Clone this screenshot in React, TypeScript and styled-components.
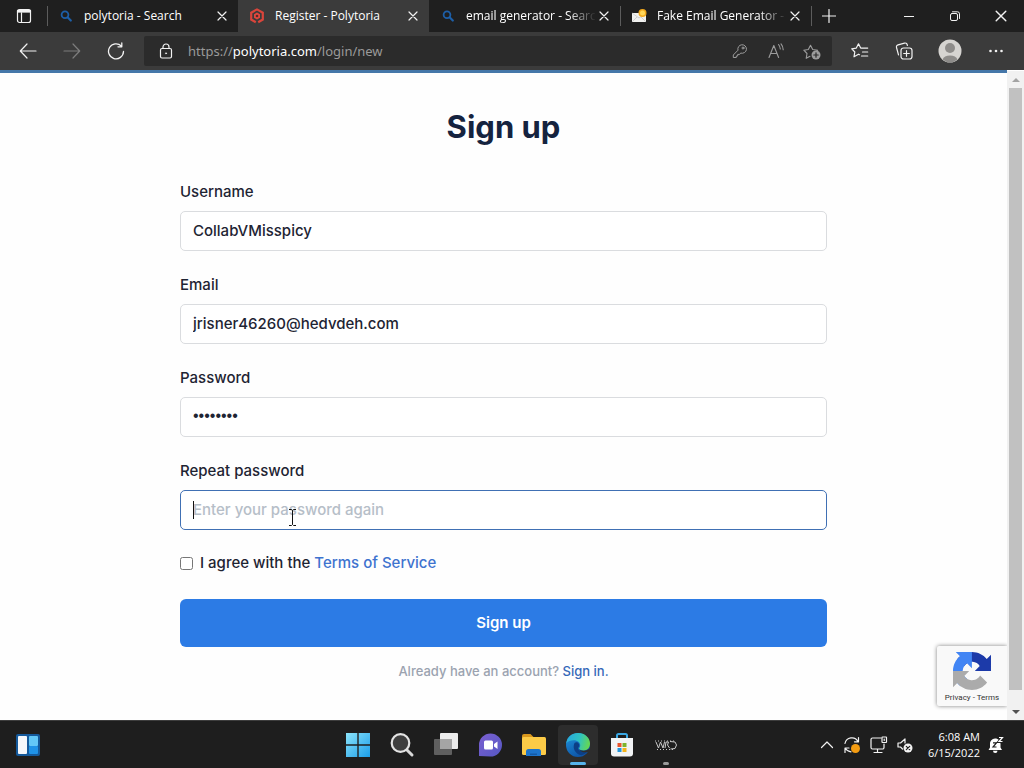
import React from "react";
import styled, { createGlobalStyle, css } from "styled-components";

const uiFont = `"Open Sans", "Noto Sans", sans-serif`;
const siteFont = `Inter, Roboto, sans-serif`;

const GlobalStyle = createGlobalStyle`
  *, *::before, *::after { box-sizing: border-box; }
  body { margin: 0; background: #1e1e1e; }
  button, input { font: inherit; }
`;

/* ---------- shared ---------- */

const Desktop = styled.div`
  min-height: 100vh;
  display: flex;
  flex-direction: column;
  font-family: ${uiFont};
  font-size: 12px;
  color: #fff;
`;

const IconButton = styled.button<{ $w?: number; $tone?: string }>`
  width: ${(p) => p.$w ?? 44}px;
  align-self: stretch;
  flex: none;
  padding: 0;
  border: 0;
  background: none;
  color: ${(p) => p.$tone ?? "#f2f2f2"};
  display: flex;
  align-items: center;
  justify-content: center;
`;

const Svg = styled.svg`
  display: block;
  flex: none;
  fill: none;
`;

type IconProps = { size?: number; box?: number; children: React.ReactNode };
const Line = ({ size = 16, box = 16, children }: IconProps) => (
  <Svg width={size} height={size} viewBox={`0 0 ${box} ${box}`} stroke="currentColor" strokeLinecap="round" strokeLinejoin="round" aria-hidden="true">
    {children}
  </Svg>
);

/* ---------- browser chrome ---------- */

const TabStrip = styled.header`
  height: 32px;
  display: flex;
  background: #1f1f1f;
`;

const Tab = styled.div<{ $active?: boolean; $divider?: boolean }>`
  flex: 0 1 191px;
  min-width: 0;
  display: flex;
  align-items: center;
  padding: 0 8px 0 11px;
  background: ${(p) => (p.$active ? "#3b3b3b" : "transparent")};
  ${(p) =>
    p.$divider &&
    css`
      background: linear-gradient(#5c5c5c, #5c5c5c) left center / 1px 20px no-repeat;
    `}
`;

const TabTitle = styled.button<{ $fade?: boolean }>`
  flex: 1;
  min-width: 0;
  padding: 0;
  margin: 0 0 0 10px;
  border: 0;
  background: none;
  color: #fff;
  text-align: left;
  white-space: nowrap;
  overflow: hidden;
  font-size: 12px;
  line-height: 20px;
  ${(p) => p.$fade && css`mask-image: linear-gradient(to left, transparent, #000 28px);`}
`;

const NewTab = styled(IconButton)`
  background: linear-gradient(#5c5c5c, #5c5c5c) left center / 1px 20px no-repeat;
`;

const Spacer = styled.div`
  flex: 1;
`;

const Toolbar = styled.nav`
  height: 38px;
  display: flex;
  align-items: center;
  padding: 0 6px;
  background: #3b3b3b;
`;

const AddressBar = styled.div`
  flex: 1;
  min-width: 0;
  height: 30px;
  margin: 0 6px;
  padding-right: 2px;
  display: flex;
  align-items: center;
  border-radius: 2px;
  background: #2b2b2b;
`;

const Address = styled.div`
  flex: 1;
  min-width: 0;
  font-family: "Noto Sans", "Open Sans", sans-serif;
  font-size: 13px;
  line-height: 20px;
  color: #9a9a9a;
  white-space: nowrap;
  overflow: hidden;
  outline: 0;
`;

const Domain = styled.span`
  color: #fff;
`;

/* ---------- page ---------- */

const Viewport = styled.div`
  flex: 1;
  display: flex;
  background: #fff;
`;

const Page = styled.main`
  flex: 1;
  min-width: 0;
  position: relative;
  padding: 32px 24px;
  border-top: 3px solid #4577a9;
  background: #fefefe;
  color: #1e2433;
  font-family: ${siteFont};
  font-size: 15px;
  font-weight: 500;
  line-height: 24px;
`;

const Form = styled.form`
  max-width: 647px;
  margin: 0 auto;
  display: flex;
  flex-direction: column;
`;

const Title = styled.h1`
  margin: 0 0 31px;
  font-size: 31px;
  line-height: 44px;
  font-weight: 700;
  color: #15233f;
  text-align: center;
`;

const Field = styled.div`
  display: flex;
  flex-direction: column;
  gap: 7px;
  margin-bottom: 22px;
`;

const FieldBox = styled.div`
  position: relative;
  display: flex;
`;

const TextInput = styled.input<{ $focused?: boolean }>`
  width: 100%;
  height: 40px;
  padding: 0 12px 2px;
  border: 1px solid ${(p) => (p.$focused ? "#4070b4" : "#dadcdf")};
  border-radius: 5px;
  outline: 0;
  background: #fff;
  color: #1e2433;
  &[type="password"]:not(:placeholder-shown) {
    font-family: "Liberation Sans", Arial, sans-serif;
    font-size: 16px;
  }
  &::placeholder {
    color: #b6bec8;
    opacity: 1;
  }
`;

const Caret = styled.span`
  position: absolute;
  left: 13px;
  top: 11px;
  width: 1px;
  height: 18px;
  background: #111;
`;

const Pointer = styled.span`
  position: absolute;
  left: 108px;
  top: 19px;
`;

const Terms = styled.div`
  display: flex;
  align-items: center;
  gap: 7px;
  line-height: 22px;
`;

const Check = styled.input`
  width: 13px;
  height: 13px;
  margin: 0;
`;

const Link = styled.a`
  color: #3e73cf;
  text-decoration: none;
`;

const Submit = styled.button`
  height: 48px;
  margin: 25px 0 12px;
  border: 0;
  border-radius: 6px;
  background: #2c7be5;
  color: #fff;
  font-weight: 600;
`;

const Already = styled.p`
  margin: 0;
  font-size: 13px;
  text-align: center;
  color: #9ba3b0;
  a { color: #3468b8; }
`;

const Captcha = styled.aside`
  position: absolute;
  right: 0;
  bottom: 14px;
  width: 70px;
  height: 60px;
  padding-top: 6px;
  display: flex;
  flex-direction: column;
  align-items: center;
  border-radius: 2px 0 0 2px;
  background: #f9f9f9;
  box-shadow: 0 0 4px #808080;
  clip-path: inset(-6px 0 -6px -6px);
  font: 8px/12px Roboto, sans-serif;
  color: #333;
  svg { margin-bottom: 2px; }
  a { color: inherit; text-decoration: none; }
`;

const ScrollBar = styled.div`
  width: 17px;
  padding: 0 2px;
  margin-top: 1px;
  display: flex;
  flex-direction: column;
  align-items: center;
  background: #f1f1f1;
`;

const ScrollThumb = styled.div`
  flex: 1;
  width: 13px;
  background: #c1c1c1;
`;

const ScrollArrow = styled.button<{ $end?: boolean }>`
  height: ${(p) => (p.$end ? 30 : 17)}px;
  padding: ${(p) => (p.$end ? "13px 0 0" : "0")};
  border: 0;
  background: none;
  display: flex;
  align-items: center;
`;

/* ---------- taskbar ---------- */

const Taskbar = styled.footer`
  height: 48px;
  display: grid;
  grid-template-columns: 1fr auto 1fr;
  background: #1e1e1e;
  border-top: 1px solid #3d3d3d;
`;

const TaskGroup = styled.div<{ $end?: boolean }>`
  display: flex;
  align-items: center;
  justify-content: ${(p) => (p.$end ? "flex-end" : "flex-start")};
  padding: ${(p) => (p.$end ? "0 20px 0 0" : "0")};
`;

const Widgets = styled(IconButton)`
  margin-left: 6px;
`;

const AppTile = styled(IconButton)<{ $active?: boolean; $running?: boolean }>`
  position: relative;
  align-self: center;
  height: 40px;
  width: 40px;
  margin: 0 2px;
  border-radius: 4px;
  background: ${(p) => (p.$active ? "#2d2d2d" : "none")};
  ${(p) =>
    (p.$active || p.$running) &&
    css`
      &::after {
        content: "";
        position: absolute;
        bottom: 0;
        width: ${p.$active ? 16 : 6}px;
        height: 3px;
        border-radius: 2px;
        background: ${p.$active ? "#56b4ec" : "#9a9a9a"};
      }
    `}
`;

const Clock = styled.time`
  margin: 0 8px 0 10px;
  text-align: right;
  font-size: 11px;
  line-height: 16px;
  white-space: nowrap;
`;

/* ---------- icons ---------- */

const Close = ({ size = 10 }: { size?: number }) => (
  <Line size={size} box={10}><path d="M1 1l8 8M9 1l-8 8" strokeWidth="1.2" /></Line>
);

const SearchFav = () => (
  <Line><circle cx="7" cy="6.7" r="3.4" stroke="#1d5fa8" strokeWidth="1.8" /><path d="M9.6 9.3l3.2 3.2" stroke="#1d5fa8" strokeWidth="2.2" /></Line>
);

const PolyFav = () => (
  <Svg width="16" height="16" viewBox="0 0 16 16" aria-hidden="true">
    <path d="M6.800 14.200L2.200 11.500V4.700L8 1.400l5.800 3.300v6.800l-4.600 2.700" stroke="#d9453b" strokeWidth="2.200" />
    <path d="M8 4.600l3 1.700v3.400L8 11.600 5 9.700V6.300z" fill="#e2483d" />
    <circle cx="8" cy="8" r="1.300" fill="#5a2a28" />
  </Svg>
);

const MailFav = () => (
  <Svg width="16" height="16" viewBox="0 0 16 16" aria-hidden="true">
    <rect x="1" y="5" width="14" height="9" fill="#f1f1ef" />
    <path d="M1 5l7 5 7-5M1 14l5-5M15 14l-5-5" stroke="#cfcfcf" strokeWidth="1" />
    <circle cx="11.500" cy="5" r="4" fill="#f2a81d" />
    <circle cx="11.500" cy="5" r="2.500" fill="#ffd75a" />
  </Svg>
);

const TabActions = () => (
  <Line size={16}><rect x="1.500" y="1.500" width="13" height="13" rx="2" strokeWidth="1.200" /><path d="M2 4h12M5.500 5v9" strokeWidth="1.200" /><path d="M2 3h12" strokeWidth="2.400" /></Line>
);

const Back = () => (
  <Line size={18} box={18}><path d="M17 9H1.500M8 2L1.300 9 8 16" strokeWidth="1.200" /></Line>
);
const Forward = () => (
  <Line size={18} box={18}><path d="M1 9h15.500M10 2l6.700 7-6.700 7" strokeWidth="1.200" /></Line>
);
const Refresh = () => (
  <Line size={18} box={18}><path d="M16.500 9.500A7.500 7.500 0 1 1 14.300 4M14.800 1v3.800H11" strokeWidth="1.300" /></Line>
);
const Lock = () => (
  <Line><rect x="2.500" y="5.500" width="11" height="9.500" rx="1.500" strokeWidth="1.200" /><path d="M5 5.500V4a3 3 0 0 1 6 0v1.500" strokeWidth="1.200" /><circle cx="8" cy="10.300" r=".6" fill="currentColor" strokeWidth=".6" /></Line>
);
const Key = () => (
  <Line><path d="M9 10.200A4.300 4.300 0 1 0 6 7.200L1.300 12v2.500h3V13h1.400v-1.600H7.300z" /><circle cx="11" cy="5" r="1" /></Line>
);
const ReadAloud = () => (
  <Line><path d="M1 14.500L5.800 2.500l4.800 12M2.800 10.500h6M10.500 1.500a7 7 0 0 1 1.800 4.500M13 .8a9 9 0 0 1 2.200 6" strokeWidth="1.100" /></Line>
);
const AddFavorite = () => (
  <Line size={18} box={18}>
    <path d="M7 14.300l-3.800 2 .8-4.800L.8 8.200l4.500-.7 2.200-4.300 2.200 4.300 5 .7-1.500 1.500" strokeWidth="1.100" />
    <circle cx="13" cy="13" r="4.500" fill="currentColor" stroke="none" />
    <path d="M13 10.800v4.400M10.800 13h4.400" stroke="#2b2b2b" strokeWidth="1.200" />
  </Line>
);
const Favorites = () => (
  <Line size={18} box={18}>
    <path d="M8.500 12.700l-1-.5L3 14.800l.8-4.800L.8 6.800l4.500-.7L7.500 1.800l2.200 4.300h7M11.500 10h5.200M10.500 14h6.200" strokeWidth="1.200" />
  </Line>
);
const Collections = () => (
  <Line size={18} box={18}>
    <rect x="6" y="6" width="11" height="11" rx="2.500" strokeWidth="1.200" />
    <path d="M11.500 8.700v5.600M8.700 11.500h5.600M3.500 12.800L1.500 5.500a2.200 2.200 0 0 1 1.600-2.700l6.400-1.700a2.200 2.200 0 0 1 2.700 1.600l.2.800" strokeWidth="1.200" />
  </Line>
);
const Avatar = () => (
  <Svg width="24" height="24" viewBox="0 0 24 24" aria-hidden="true">
    <circle cx="12" cy="12" r="11.500" fill="#d6d4d1" />
    <circle cx="12" cy="9" r="5" fill="#8e8c8a" />
    <path d="M4.500 20.500a7.800 5.500 0 0 1 15 0A11.500 11.500 0 0 1 4.500 20.500z" fill="#8e8c8a" />
  </Svg>
);
const More = () => (
  <Line><g fill="currentColor" stroke="none"><circle cx="2.500" cy="8" r="1.300" /><circle cx="8" cy="8" r="1.300" /><circle cx="13.500" cy="8" r="1.300" /></g></Line>
);

const IBeam = () => (
  <Svg width="9" height="17" viewBox="0 0 9 17" stroke="#111" aria-hidden="true">
    <path d="M1 .5h2.500l1 1 1-1H8M4.500 1.500v14M1 16.500h2.500l1-1 1 1H8" />
  </Svg>
);

const Recaptcha = () => (
  <Svg width="38" height="38" viewBox="0 0 64 64" aria-hidden="true">
    <path fill="#1c3aa9" d="M64 31.955l-.033-1.370V4.687l-7.160 7.160C50.948 4.674 42.033.093 32.050.093c-10.400 0-19.622 4.960-25.458 12.640l11.736 11.860a15.550 15.550 0 0 1 4.754-5.334c2.050-1.600 4.952-2.906 8.968-2.906.485 0 .86.057 1.135.163 4.976.393 9.288 3.140 11.828 7.124l-8.307 8.307L64 31.953" />
    <path fill="#4285f4" d="M31.862.094l-1.370.033H4.594l7.160 7.160C4.580 13.147 0 22.060 0 32.046c0 10.400 4.960 19.622 12.640 25.458L24.500 45.768a15.550 15.550 0 0 1-5.334-4.754c-1.600-2.050-2.906-4.952-2.906-8.968 0-.485.057-.86.163-1.135.393-4.976 3.140-9.288 7.124-11.828l8.307 8.307L31.860.095" />
    <path fill="#ababab" d="M.001 32.045l.033 1.370v25.898l7.160-7.160c5.860 7.173 14.774 11.754 24.760 11.754 10.400 0 19.622-4.960 25.458-12.640l-11.736-11.860a15.550 15.550 0 0 1-4.754 5.334c-2.050 1.600-4.952 2.906-8.968 2.906-.485 0-.86-.057-1.135-.163-4.976-.393-9.288-3.140-11.828-7.124l8.307-8.307c-10.522.040-22.400.066-27.295-.005" />
  </Svg>
);

const WidgetsIcon = () => (
  <Svg width="24" height="24" viewBox="0 0 24 24" aria-hidden="true">
    <rect x="0" y="1" width="24" height="22" rx="2" fill="#14599b" />
    <rect x="2" y="3" width="9" height="18" rx="1" fill="#f4f7fb" />
    <rect x="13" y="3" width="9" height="10" rx="1" fill="#63c8f8" />
    <rect x="13" y="13" width="9" height="8" rx="1" fill="#1f93e8" />
  </Svg>
);

const apps: { name: string; active?: boolean; running?: boolean; art: React.ReactNode }[] = [
  {
    name: "Start",
    art: (
      <>
        <defs><linearGradient id="win" x1="0" y1="0" x2="1" y2="1"><stop offset="0" stopColor="#8be4fb" /><stop offset="1" stopColor="#1b9de8" /></linearGradient></defs>
        <path fill="url(#win)" d="M1 1h11.300v11.300H1zM13.700 1H25v11.300H13.700zM1 13.700h11.300V25H1zM13.700 13.700H25V25H13.700z" />
      </>
    ),
  },
  {
    name: "Search",
    art: (
      <>
        <path d="M17.500 17.500l5.500 5.500" stroke="#d9d9d9" strokeWidth="3" strokeLinecap="round" />
        <circle cx="11.500" cy="11" r="8.800" fill="#3f3f3f" stroke="#e4e4e4" strokeWidth="2.200" />
      </>
    ),
  },
  {
    name: "Task view",
    art: (
      <>
        <rect x="7" y="1" width="18" height="16" rx="1" fill="#ececec" />
        <rect x="1" y="7" width="18" height="16" rx="1" fill="#6b6b6b" fillOpacity=".85" />
        <path d="M7 7h12v10H7z" fill="#a5a5a5" />
      </>
    ),
  },
  {
    name: "Chat",
    art: (
      <>
        <defs><linearGradient id="chat" x1="0" y1="0" x2="1" y2="1"><stop offset="0" stopColor="#7b5fd0" /><stop offset="1" stopColor="#5558c4" /></linearGradient></defs>
        <path d="M2 24V13A11.500 11.500 0 1 1 13.500 24.500z" fill="url(#chat)" />
        <rect x="7" y="8.500" width="9" height="9" rx="1.500" fill="#fff" />
        <path d="M17 12l3.500-2.500v7.500L17 14.500z" fill="#fff" />
      </>
    ),
  },
  {
    name: "File Explorer",
    art: (
      <>
        <path d="M1 4a2 2 0 0 1 2-2h6.500l3 3H12v6H1z" fill="#d9971d" />
        <rect x="1" y="5" width="24" height="18" rx="1.500" fill="#fccb47" />
        <path d="M5 24v-4.500a2.500 2.500 0 0 1 2.500-2.500h10a2.500 2.500 0 0 1 2.500 2.500V24z" fill="#1c74cc" />
        <path d="M9 23v-1.500h7V23z" fill="#145aa6" />
      </>
    ),
  },
  {
    name: "Microsoft Edge",
    active: true,
    art: (
      <>
        <defs>
          <linearGradient id="edgeTop" x1="0" y1=".3" x2="1" y2=".5"><stop offset="0" stopColor="#28a9e0" /><stop offset=".55" stopColor="#2fc3c0" /><stop offset="1" stopColor="#67d84f" /></linearGradient>
          <linearGradient id="edgeSide" x1="0" y1="0" x2=".5" y2="1"><stop offset="0" stopColor="#2096dd" /><stop offset="1" stopColor="#0d55a8" /></linearGradient>
        </defs>
        <circle cx="13" cy="13" r="12" fill="url(#edgeSide)" />
        <path d="M1.200 11.500C2 5 7 1 13 1c7 0 12 5 12 10.500 0 4.500-3 7-6.500 7-3 0-4.500-1.300-4.500-2 0-.6 1.200-1.200 1.200-3.200 0-2.500-2.500-5-6.500-5-3 0-6 1.200-7.500 3.200z" fill="url(#edgeTop)" />
        <path d="M9.500 11c-2.500 5 1 11.500 7 12.300 3-.8 5-2.300 6.500-4.800-2 1-3.500 1.200-5 1-3.500-.3-5-2-5-3.500 0-.5 1.200-1.200 1.200-2.800 0-1.700-1.200-2.700-2.200-2.900-.9-.1-1.800.1-2.500.7z" fill="#0c3f86" />
        <path d="M14 16.500c0 1 1.700 2.200 4.500 2.200 2 0 4-.7 5-1.700l1 1.500-1.500 1.500c-3.500 1-8 0-9-3.500z" fill="#2d2d2d" />
      </>
    ),
  },
  {
    name: "Microsoft Store",
    art: (
      <>
        <path d="M8 7V3.500A1.500 1.500 0 0 1 9.500 2h7A1.500 1.500 0 0 1 18 3.500V7" stroke="#3aa8e4" strokeWidth="2" />
        <path d="M2 6h22v15.500a3 3 0 0 1-3 3H5a3 3 0 0 1-3-3z" fill="#f1f3f5" />
        <path d="M8.500 11h4v4h-4z" fill="#e8532b" /><path d="M13.500 11h4v4h-4z" fill="#7db42c" />
        <path d="M8.500 16h4v4h-4z" fill="#2296dd" /><path d="M13.500 16h4v4h-4z" fill="#f4b41a" />
      </>
    ),
  },
  {
    name: "WRD",
    running: true,
    art: (
      <g stroke="#c9c9c9" strokeWidth="1">
        <path d="M3 10l2.500 6 2-6 2.500 6 1.500-6M12 16l1-6h2.500l-1 3 2 3M17 9.500l5 .5 1.500 3-1.500 3.500-4.500.5" />
        <path d="M2 9h20M4 17.500h18" strokeDasharray="1 2" />
      </g>
    ),
  },
];

const Chevron = () => (
  <Line size={14} box={14}><path d="M1.500 9.500L7 4l5.500 5.500" strokeWidth="1.200" /></Line>
);
const Sync = () => (
  <Line size={18} box={18}>
    <path d="M2 7.500A7 7 0 0 1 15 5.500M15.500 1.500v4.300h-4M2 16.500V12h4M2.500 12.500A7 7 0 0 0 8 15.800" strokeWidth="1.200" />
    <circle cx="12.500" cy="12.500" r="4.500" fill="#f39c12" stroke="none" />
  </Line>
);
const Network = () => (
  <Line size={18} box={18}>
    <path d="M11 2H2.500A1.500 1.500 0 0 0 1 3.500v8A1.500 1.500 0 0 0 2.500 13H12.500A1.500 1.500 0 0 0 14 11.500V8M7.500 13v3.500M4 16.500h8" strokeWidth="1.200" />
    <rect x="12" y="1" width="4.500" height="5.500" rx=".5" strokeWidth="1.200" /><path d="M14.200 3v1.500" strokeWidth="1.200" />
  </Line>
);
const Muted = () => (
  <Line size={18} box={18}>
    <path d="M6.500 13L4.500 11H2V7h2.500L9 3v4" strokeWidth="1.200" />
    <circle cx="12" cy="12" r="4.500" fill="currentColor" stroke="none" />
    <path d="M10.300 10.300l3.400 3.400M13.700 10.300l-3.400 3.400" stroke="#1e1e1e" strokeWidth="1.200" />
  </Line>
);
const Bell = () => (
  <Svg width="16" height="18" viewBox="0 0 16 18" aria-hidden="true">
    <path d="M2 8a5 5 0 0 1 5-5.500c3.500 0 5.500 2.500 5.500 5.500v3.500l1.500 2.500H.5L2 11.500zM5 14.800h4.500a2.200 2.200 0 0 1-4.500 0z" fill="#fff" />
    <path d="M5 6.800h3.500L5 11h3.500" stroke="#1e1e1e" strokeWidth="1.200" />
    <path d="M11 1.500h3.500l-3.500 4h3.500" stroke="#1e1e1e" strokeWidth="2.800" /><path d="M11 1.500h3.500l-3.500 4h3.500" stroke="#fff" strokeWidth="1.200" />
  </Svg>
);

/* ---------- content ---------- */

const tabs = [
  { title: "polytoria - Search", icon: <SearchFav />, divider: true },
  { title: "Register - Polytoria", icon: <PolyFav />, active: true },
  { title: "email generator - Searc", icon: <SearchFav />, fade: true },
  { title: "Fake Email Generator -", icon: <MailFav />, divider: true, fade: true },
];

const fields = [
  { id: "username", label: "Username", type: "text", value: "CollabVMisspicy" },
  { id: "email", label: "Email", type: "email", value: "jrisner46260@hedvdeh.com" },
  { id: "password", label: "Password", type: "password", value: "password" },
];

export default function App() {
  return (
    <Desktop>
      <GlobalStyle />
      <TabStrip>
        <IconButton $w={47} aria-label="Tab actions"><TabActions /></IconButton>
        {tabs.map((t) => (
          <Tab key={t.title} $active={t.active} $divider={t.divider}>
            {t.icon}
            <TabTitle $fade={t.fade}>{t.title}</TabTitle>
            <IconButton $w={16} aria-label={`Close ${t.title}`}><Close /></IconButton>
          </Tab>
        ))}
        <NewTab $w={36} aria-label="New tab">
          <Line size={14} box={14}><path d="M7 .5v13M.5 7h13" strokeWidth="1.200" /></Line>
        </NewTab>
        <Spacer />
        <IconButton $w={46} aria-label="Minimize"><Line size={10} box={10}><path d="M0 5.500h10" /></Line></IconButton>
        <IconButton $w={46} aria-label="Restore">
          <Line size={10} box={10}><rect x=".5" y="2.500" width="7" height="7" rx="1.500" /><path d="M2.500.8h5A2 2 0 0 1 9.500 2.800v4.700" /></Line>
        </IconButton>
        <IconButton $w={46} aria-label="Close window"><Close size={12} /></IconButton>
      </TabStrip>

      <Toolbar>
        <IconButton aria-label="Back"><Back /></IconButton>
        <IconButton $tone="#7d7d7d" aria-label="Forward"><Forward /></IconButton>
        <IconButton aria-label="Refresh"><Refresh /></IconButton>
        <AddressBar>
          <IconButton aria-label="Site information"><Lock /></IconButton>
          <Address role="textbox" aria-label="Address" contentEditable suppressContentEditableWarning spellCheck={false}>
            https://<Domain>polytoria.com</Domain>/login/new
          </Address>
          <IconButton $w={36} $tone="#9c9c9c" aria-label="Passwords"><Key /></IconButton>
          <IconButton $w={36} $tone="#9c9c9c" aria-label="Read aloud"><ReadAloud /></IconButton>
          <IconButton $w={36} $tone="#9c9c9c" aria-label="Add to favorites"><AddFavorite /></IconButton>
        </AddressBar>
        <IconButton aria-label="Favorites"><Favorites /></IconButton>
        <IconButton aria-label="Collections"><Collections /></IconButton>
        <IconButton $w={48} aria-label="Profile"><Avatar /></IconButton>
        <IconButton aria-label="Settings and more"><More /></IconButton>
      </Toolbar>

      <Viewport>
        <Page>
          <Form onSubmit={(e) => e.preventDefault()}>
            <Title>Sign up</Title>
            {fields.map((f) => (
              <Field key={f.id}>
                <label htmlFor={f.id}>{f.label}</label>
                <TextInput id={f.id} type={f.type} defaultValue={f.value} spellCheck={false} />
              </Field>
            ))}
            <Field>
              <label htmlFor="repeat">Repeat password</label>
              <FieldBox>
                <TextInput id="repeat" type="password" placeholder="Enter your password again" $focused />
                <Caret />
                <Pointer><IBeam /></Pointer>
              </FieldBox>
            </Field>
            <Terms>
              <Check id="agree" type="checkbox" />
              <span>
                <label htmlFor="agree">I agree with the </label>
                <Link href="#terms">Terms of Service</Link>
              </span>
            </Terms>
            <Submit type="submit">Sign up</Submit>
            <Already>
              Already have an account? <Link href="#login">Sign in.</Link>
            </Already>
          </Form>
          <Captcha>
            <Recaptcha />
            <span><a href="#privacy">Privacy</a> - <a href="#captcha-terms">Terms</a></span>
          </Captcha>
        </Page>
        <ScrollBar>
          <ScrollArrow aria-label="Scroll up"><Svg width="8" height="4" viewBox="0 0 8 4"><path d="M4 0l4 4H0z" fill="#a3a3a3" /></Svg></ScrollArrow>
          <ScrollThumb />
          <ScrollArrow $end aria-label="Scroll down"><Svg width="8" height="4" viewBox="0 0 8 4"><path d="M4 4l4-4H0z" fill="#505050" /></Svg></ScrollArrow>
        </ScrollBar>
      </Viewport>

      <Taskbar>
        <TaskGroup>
          <Widgets aria-label="Widgets"><WidgetsIcon /></Widgets>
        </TaskGroup>
        <TaskGroup>
          {apps.map((a) => (
            <AppTile key={a.name} aria-label={a.name} $active={a.active} $running={a.running}>
              <Svg width="26" height="26" viewBox="0 0 26 26" aria-hidden="true">{a.art}</Svg>
            </AppTile>
          ))}
        </TaskGroup>
        <TaskGroup $end>
          <IconButton $w={22} aria-label="Show hidden icons"><Chevron /></IconButton>
          <IconButton $w={28} aria-label="Updates"><Sync /></IconButton>
          <IconButton $w={26} aria-label="Network"><Network /></IconButton>
          <IconButton $w={26} aria-label="Volume"><Muted /></IconButton>
          <Clock>6:08 AM<br />6/15/2022</Clock>
          <IconButton $w={16} aria-label="Notifications"><Bell /></IconButton>
        </TaskGroup>
      </Taskbar>
    </Desktop>
  );
}
